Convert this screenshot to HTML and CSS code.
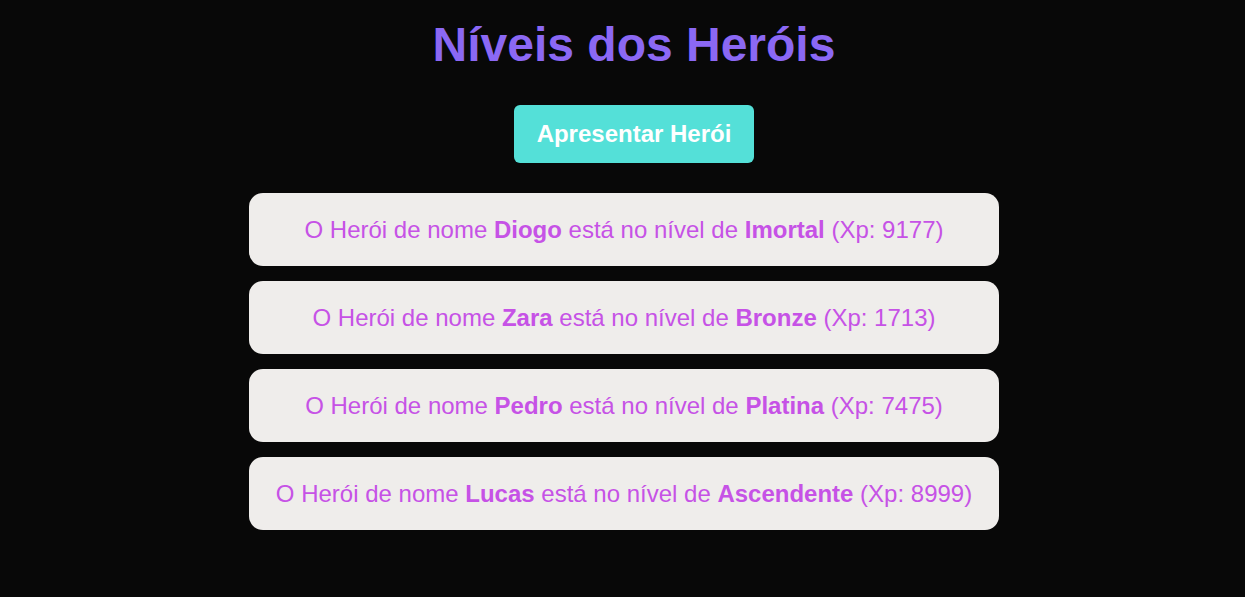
FILE: index.html
```html
<!DOCTYPE html>
<html lang="pt">
<head>
<meta charset="utf-8">
<title>Níveis dos Heróis</title>
<link rel="stylesheet" href="styles.css">
</head>
<body>
<header class="top">
  <h1 class="title">Níveis dos Heróis</h1>
  <button class="btn">Apresentar Herói</button>
</header>
<main class="list">
  <div class="card">O Herói de nome <strong>Diogo</strong> está no nível de <strong>Imortal</strong> (Xp: 9177)</div>
  <div class="card">O Herói de nome <strong>Zara</strong> está no nível de <strong>Bronze</strong> (Xp: 1713)</div>
  <div class="card">O Herói de nome <strong>Pedro</strong> está no nível de <strong>Platina</strong> (Xp: 7475)</div>
  <div class="card">O Herói de nome <strong>Lucas</strong> está no nível de <strong>Ascendente</strong> (Xp: 8999)</div>
</main>
</body>
</html>
```
FILE: styles.css
```css
html, body {
  margin: 0;
  padding: 0;
  background: #080808;
}
body {
  font-family: "Liberation Sans", Arial, sans-serif;
  padding-top: 17px;
}
.top {
  display: flex;
  flex-direction: column;
  align-items: center;
  padding-left: 23px;
}
.title {
  margin: 0;
  font-size: 48px;
  line-height: 56px;
  font-weight: bold;
  color: #8b68f4;
}
.btn {
  margin-top: 32px;
  width: 240px;
  height: 58px;
  border: none;
  border-radius: 6px;
  background: #54e0d8;
  color: #ffffff;
  font-family: "Liberation Sans", Arial, sans-serif;
  font-size: 24px;
  font-weight: bold;
  padding: 0;
}
.list {
  display: flex;
  flex-direction: column;
  gap: 15px;
  width: 750px;
  margin: 30px auto 0;
  padding-left: 3px;
}
.card {
  height: 73px;
  line-height: 74px;
  text-align: center;
  background: #efedeb;
  border-radius: 14px;
  color: #c652e6;
  font-size: 24px;
}
```
